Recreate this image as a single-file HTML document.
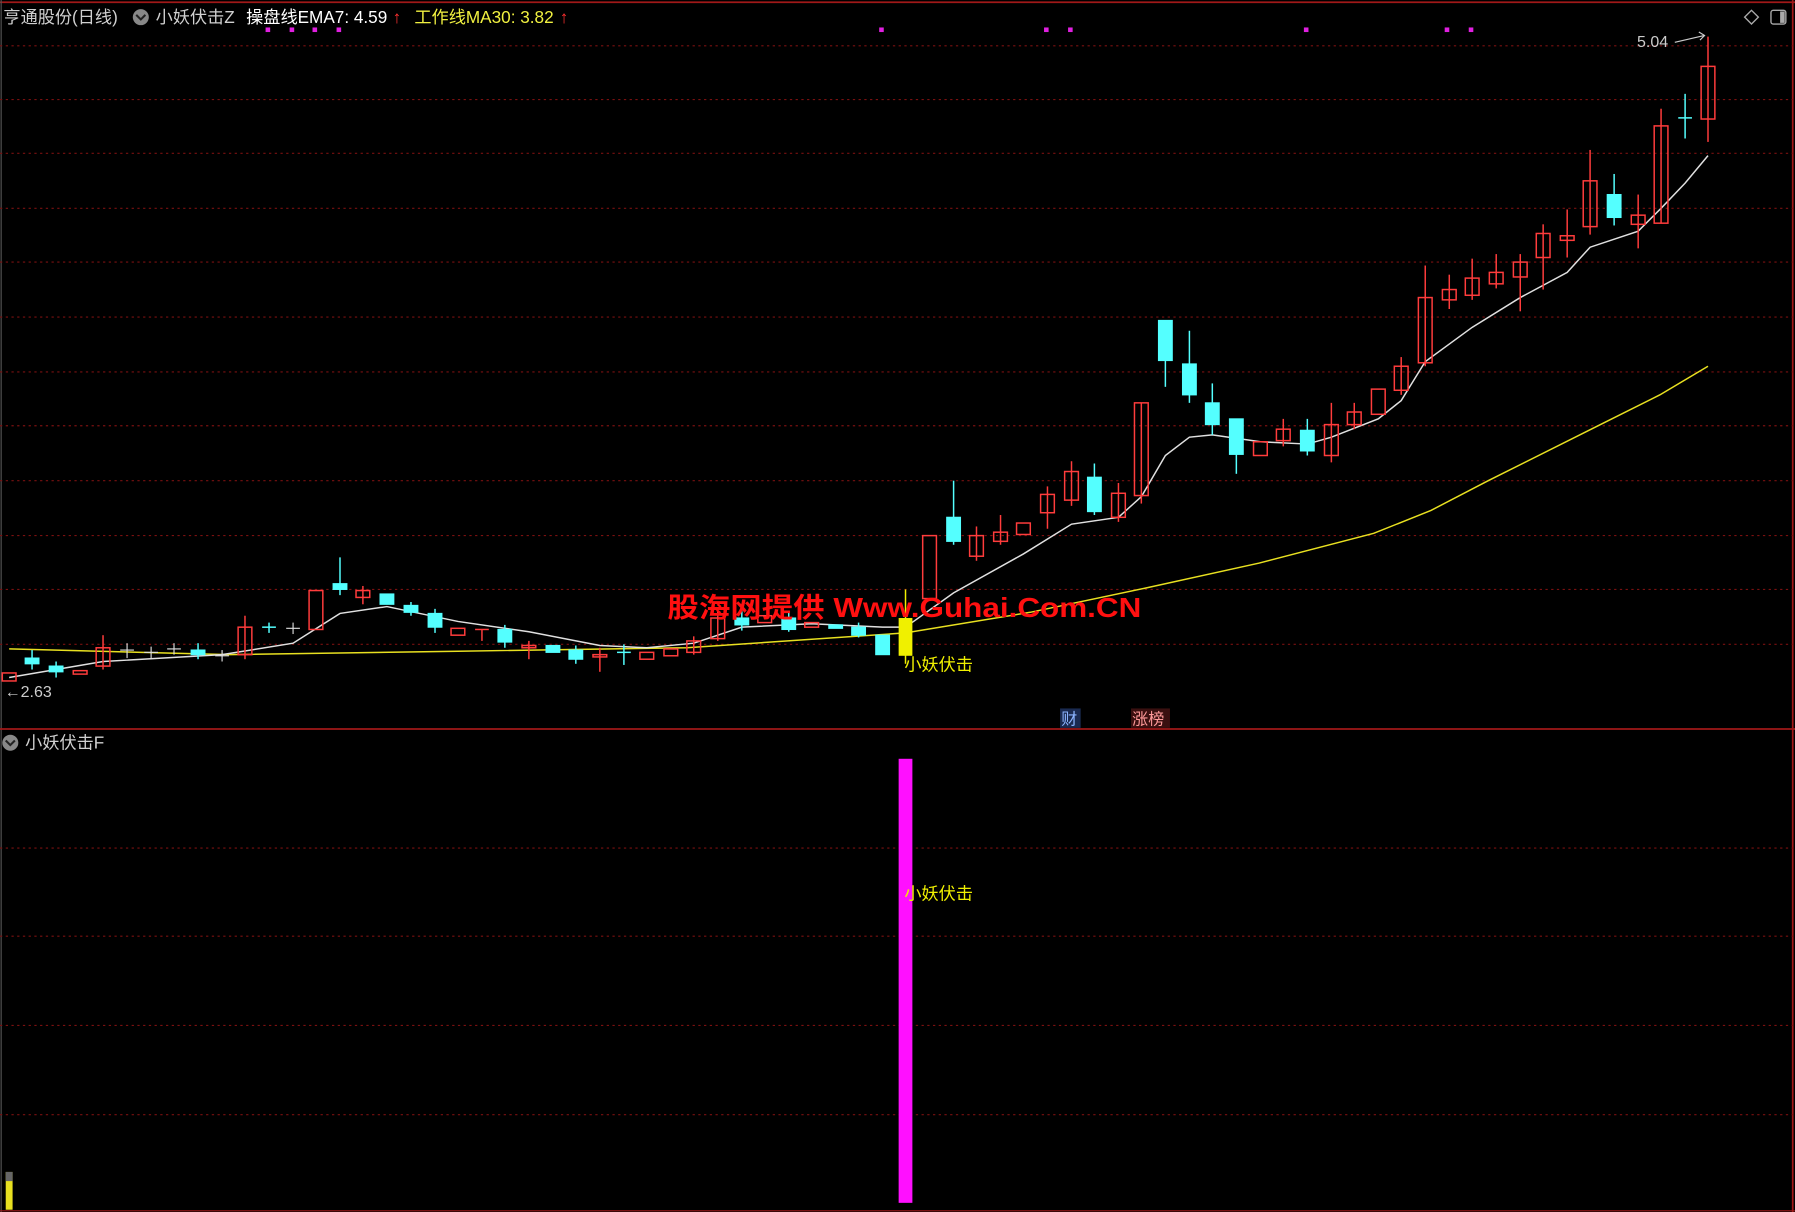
<!DOCTYPE html>
<html><head><meta charset="utf-8"><style>
html,body{margin:0;padding:0;background:#000;overflow:hidden}
svg{display:block}
text{font-family:"Liberation Sans","Noto Sans CJK SC",sans-serif}
.r{fill:none;stroke:#ff3c3c;stroke-width:1.3}
.c{fill:#54ffff;stroke:#54ffff;stroke-width:1}
.w{stroke:#ff3c3c;stroke-width:1.3}
.wc{stroke:#54ffff;stroke-width:1.3}
.g{stroke:#7a1010;stroke-width:1;stroke-dasharray:2 3}
</style></head><body>
<svg width="1795" height="1212" viewBox="0 0 1568 1059" preserveAspectRatio="none">
<rect width="1568" height="1059" fill="#000"/>
<line x1="0" y1="2" x2="1568" y2="2" stroke="#a01818" stroke-width="1.5"/>
<line x1="1566" y1="0" x2="1566" y2="1059" stroke="#a01818" stroke-width="1.5"/>
<line x1="1" y1="0" x2="1" y2="1059" stroke="#555" stroke-width="1"/>
<line x1="0" y1="637" x2="1568" y2="637" stroke="#a01818" stroke-width="1.5"/>
<line x1="0" y1="1058" x2="1568" y2="1058" stroke="#a01818" stroke-width="1"/>
<g class="g">
<line x1="0" y1="40" x2="1566" y2="40"/><line x1="0" y1="87" x2="1566" y2="87"/><line x1="0" y1="134" x2="1566" y2="134"/><line x1="0" y1="182" x2="1566" y2="182"/><line x1="0" y1="229" x2="1566" y2="229"/><line x1="0" y1="277" x2="1566" y2="277"/><line x1="0" y1="325" x2="1566" y2="325"/><line x1="0" y1="372" x2="1566" y2="372"/><line x1="0" y1="420" x2="1566" y2="420"/><line x1="0" y1="468" x2="1566" y2="468"/><line x1="0" y1="515" x2="1566" y2="515"/><line x1="0" y1="563" x2="1566" y2="563"/>
<line x1="0" y1="741" x2="1566" y2="741"/><line x1="0" y1="818" x2="1566" y2="818"/><line x1="0" y1="896" x2="1566" y2="896"/><line x1="0" y1="974" x2="1566" y2="974"/>
</g>
<text x="3" y="20" font-size="15" fill="#d0d0d0">亨通股份(日线)</text>
<circle cx="123" cy="15" r="7" fill="#888"/><path d="M119 13 L123 17 L127 13" stroke="#222" stroke-width="1.8" fill="none"/>
<text x="136" y="20" font-size="15" fill="#d0d0d0">小妖伏击Z</text>
<text x="215" y="20" font-size="15" fill="#ffffff">操盘线EMA7: 4.59</text>
<text x="343" y="20" font-size="15" fill="#ff3030">↑</text>
<text x="362" y="20" font-size="15" fill="#f0f040">工作线MA30: 3.82</text>
<text x="489" y="20" font-size="15" fill="#ff3030">↑</text>
<path d="M1530 9 L1536 15 L1530 21 L1524 15 Z" fill="none" stroke="#aaa" stroke-width="1.2"/>
<rect x="1547" y="9" width="13" height="12" rx="2" fill="none" stroke="#aaa" stroke-width="1.2"/><rect x="1555" y="10" width="4" height="10" fill="#aaa"/>
<g fill="#e020e0">
<rect x="232" y="24" width="4" height="4"/><rect x="253" y="24" width="4" height="4"/><rect x="273" y="24" width="4" height="4"/><rect x="294" y="24" width="4" height="4"/><rect x="768" y="24" width="4" height="4"/><rect x="912" y="24" width="4" height="4"/><rect x="933" y="24" width="4" height="4"/><rect x="1139" y="24" width="4" height="4"/><rect x="1262" y="24" width="4" height="4"/><rect x="1283" y="24" width="4" height="4"/>
</g>
<polyline fill="none" stroke="#e8e020" stroke-width="1.3" points="8,567 200,572 400,569 600,566 791,553 900,535 1000,514 1100,492 1200,466 1250,446 1300,420 1400,370 1450,345 1492,320"/>
<polyline fill="none" stroke="#e0e0e0" stroke-width="1.3" points="8,592 90,578 194,572 256,562 297,536 338,530 400,543 462,552 524,564 565,566 606,562 648,548 709,545 771,548 791,548 833,518 894,484 936,458 977,452 997,434 1018,398 1039,382 1059,380 1101,386 1142,388 1163,382 1204,366 1224,350 1245,316 1286,286 1328,260 1369,238 1389,216 1431,202 1451,182 1472,160 1492,136"/>
<g>
<rect class="r" x="2" y="588" width="12" height="7"/>
<line class="wc" x1="28" y1="568" x2="28" y2="585"/><rect class="c" x="22" y="575" width="12" height="5"/>
<line class="wc" x1="49" y1="578" x2="49" y2="592"/><rect class="c" x="43" y="582" width="12" height="5"/>
<rect class="r" x="64" y="586" width="12" height="3"/>
<line class="w" x1="90" y1="555" x2="90" y2="585"/><rect class="r" x="84" y="566" width="12" height="16"/>
<line stroke="#ddd" x1="105" y1="568" x2="117" y2="568"/><line stroke="#ddd" x1="111" y1="562" x2="111" y2="575"/>
<line stroke="#ddd" x1="126" y1="570" x2="138" y2="570"/><line stroke="#ddd" x1="132" y1="565" x2="132" y2="576"/>
<line stroke="#ddd" x1="146" y1="567" x2="158" y2="567"/><line stroke="#ddd" x1="152" y1="562" x2="152" y2="572"/>
<line class="wc" x1="173" y1="562" x2="173" y2="576"/><rect class="c" x="167" y="568" width="12" height="4"/>
<line stroke="#ddd" x1="188" y1="573" x2="200" y2="573"/><line stroke="#ddd" x1="194" y1="568" x2="194" y2="578"/>
<line class="w" x1="214" y1="538" x2="214" y2="576"/><rect class="r" x="208" y="548" width="12" height="24"/>
<line class="wc" x1="229" y1="548" x2="241" y2="548"/><line class="wc" x1="235" y1="544" x2="235" y2="553"/>
<line stroke="#ddd" x1="250" y1="549" x2="262" y2="549"/><line stroke="#ddd" x1="256" y1="544" x2="256" y2="554"/>
<rect class="r" x="270" y="516" width="12" height="34"/>
<line class="wc" x1="297" y1="487" x2="297" y2="520"/><rect class="c" x="291" y="510" width="12" height="5"/>
<line class="w" x1="317" y1="512" x2="317" y2="528"/><rect class="r" x="311" y="516" width="12" height="6"/>
<rect class="c" x="332" y="519" width="12" height="9"/>
<line class="wc" x1="359" y1="526" x2="359" y2="538"/><rect class="c" x="353" y="529" width="12" height="6"/>
<line class="wc" x1="380" y1="532" x2="380" y2="553"/><rect class="c" x="374" y="536" width="12" height="12"/>
<rect class="r" x="394" y="549" width="12" height="6"/>
<line class="w" x1="415" y1="550" x2="427" y2="550"/><line class="w" x1="421" y1="550" x2="421" y2="560"/>
<line class="wc" x1="441" y1="546" x2="441" y2="566"/><rect class="c" x="435" y="550" width="12" height="11"/>
<line class="w" x1="462" y1="560" x2="462" y2="576"/><rect class="r" x="456" y="564" width="12" height="2"/>
<rect class="c" x="477" y="564" width="12" height="6"/>
<line class="wc" x1="503" y1="564" x2="503" y2="580"/><rect class="c" x="497" y="568" width="12" height="8"/>
<line class="w" x1="524" y1="566" x2="524" y2="587"/><rect class="r" x="518" y="572" width="12" height="2"/>
<line class="wc" x1="539" y1="570" x2="551" y2="570"/><line class="wc" x1="545" y1="563" x2="545" y2="581"/>
<rect class="r" x="559" y="570" width="12" height="6"/>
<rect class="r" x="580" y="567" width="12" height="6"/>
<line class="w" x1="606" y1="556" x2="606" y2="572"/><rect class="r" x="600" y="560" width="12" height="10"/>
<line class="w" x1="627" y1="532" x2="627" y2="560"/><rect class="r" x="621" y="540" width="12" height="18"/>
<line class="wc" x1="648" y1="534" x2="648" y2="551"/><rect class="c" x="642" y="540" width="12" height="6"/>
<rect class="r" x="662" y="538" width="12" height="6"/>
<line class="wc" x1="689" y1="535" x2="689" y2="552"/><rect class="c" x="683" y="540" width="12" height="10"/>
<rect class="r" x="703" y="544" width="12" height="4"/>
<rect class="c" x="724" y="546" width="12" height="3"/>
<line class="wc" x1="750" y1="544" x2="750" y2="557"/><rect class="c" x="744" y="548" width="12" height="7"/>
<rect class="c" x="765" y="555" width="12" height="17"/>
<line stroke="#f0f000" stroke-width="1.3" x1="791" y1="515" x2="791" y2="580"/><rect x="785" y="540" width="12" height="33" fill="#f0f000"/>
<rect class="r" x="806" y="468" width="12" height="55"/>
<line class="wc" x1="833" y1="420" x2="833" y2="476"/><rect class="c" x="827" y="452" width="12" height="21"/>
<line class="w" x1="853" y1="460" x2="853" y2="490"/><rect class="r" x="847" y="468" width="12" height="18"/>
<line class="w" x1="874" y1="450" x2="874" y2="476"/><rect class="r" x="868" y="465" width="12" height="8"/>
<rect class="r" x="888" y="457" width="12" height="10"/>
<line class="w" x1="915" y1="425" x2="915" y2="462"/><rect class="r" x="909" y="432" width="12" height="16"/>
<line class="w" x1="936" y1="403" x2="936" y2="442"/><rect class="r" x="930" y="412" width="12" height="25"/>
<line class="wc" x1="956" y1="405" x2="956" y2="450"/><rect class="c" x="950" y="417" width="12" height="30"/>
<line class="w" x1="977" y1="422" x2="977" y2="456"/><rect class="r" x="971" y="431" width="12" height="21"/>
<line class="w" x1="997" y1="352" x2="997" y2="440"/><rect class="r" x="991" y="352" width="12" height="81"/>
<line class="wc" x1="1018" y1="280" x2="1018" y2="338"/><rect class="c" x="1012" y="280" width="12" height="35"/>
<line class="wc" x1="1039" y1="289" x2="1039" y2="352"/><rect class="c" x="1033" y="318" width="12" height="27"/>
<line class="wc" x1="1059" y1="335" x2="1059" y2="380"/><rect class="c" x="1053" y="352" width="12" height="19"/>
<line class="wc" x1="1080" y1="366" x2="1080" y2="414"/><rect class="c" x="1074" y="366" width="12" height="31"/>
<rect class="r" x="1095" y="386" width="12" height="12"/>
<line class="w" x1="1121" y1="366" x2="1121" y2="390"/><rect class="r" x="1115" y="375" width="12" height="10"/>
<line class="wc" x1="1142" y1="366" x2="1142" y2="398"/><rect class="c" x="1136" y="376" width="12" height="18"/>
<line class="w" x1="1163" y1="352" x2="1163" y2="404"/><rect class="r" x="1157" y="371" width="12" height="27"/>
<line class="w" x1="1183" y1="352" x2="1183" y2="375"/><rect class="r" x="1177" y="360" width="12" height="11"/>
<rect class="r" x="1198" y="340" width="12" height="22"/>
<line class="w" x1="1224" y1="312" x2="1224" y2="345"/><rect class="r" x="1218" y="320" width="12" height="21"/>
<line class="w" x1="1245" y1="232" x2="1245" y2="320"/><rect class="r" x="1239" y="260" width="12" height="57"/>
<line class="w" x1="1266" y1="240" x2="1266" y2="270"/><rect class="r" x="1260" y="253" width="12" height="9"/>
<line class="w" x1="1286" y1="226" x2="1286" y2="262"/><rect class="r" x="1280" y="243" width="12" height="15"/>
<line class="w" x1="1307" y1="222" x2="1307" y2="252"/><rect class="r" x="1301" y="238" width="12" height="10"/>
<line class="w" x1="1328" y1="222" x2="1328" y2="272"/><rect class="r" x="1322" y="229" width="12" height="13"/>
<line class="w" x1="1348" y1="196" x2="1348" y2="253"/><rect class="r" x="1342" y="204" width="12" height="21"/>
<line class="w" x1="1369" y1="183" x2="1369" y2="225"/><rect class="r" x="1363" y="206" width="12" height="4"/>
<line class="w" x1="1389" y1="131" x2="1389" y2="205"/><rect class="r" x="1383" y="158" width="12" height="40"/>
<line class="wc" x1="1410" y1="152" x2="1410" y2="197"/><rect class="c" x="1404" y="170" width="12" height="20"/>
<line class="w" x1="1431" y1="170" x2="1431" y2="217"/><rect class="r" x="1425" y="188" width="12" height="8"/>
<line class="w" x1="1451" y1="95" x2="1451" y2="195"/><rect class="r" x="1445" y="110" width="12" height="85"/>
<line class="wc" x1="1466" y1="103" x2="1478" y2="103"/><line class="wc" x1="1472" y1="82" x2="1472" y2="121"/>
<line class="w" x1="1492" y1="32" x2="1492" y2="124"/><rect class="r" x="1486" y="58" width="12" height="46"/>
</g>
<text x="1430" y="41" font-size="14" fill="#ccc">5.04</text>
<path d="M1463 37 L1489 31 M1484 28 L1489 31 L1485 35" stroke="#ccc" fill="none" stroke-width="1"/>
<text x="4" y="609" font-size="14" fill="#ccc">←2.63</text>
<text x="583" y="539" font-size="24" font-weight="bold" fill="#ff1010" textLength="414" lengthAdjust="spacingAndGlyphs">股海网提供 Www.Guhai.Com.CN</text>
<text x="790" y="586" font-size="15" fill="#f0f000">小妖伏击</text>
<rect x="926" y="619" width="18" height="17" fill="#1a2a50"/><text x="927" y="633" font-size="14" fill="#8cb4ff">财</text>
<rect x="988" y="619" width="34" height="17" fill="#3a1010"/><text x="989" y="633" font-size="14" fill="#ff9a9a">涨榜</text>
<circle cx="9" cy="649" r="7" fill="#888"/><path d="M5 647 L9 651 L13 647" stroke="#222" stroke-width="1.8" fill="none"/>
<text x="22" y="654" font-size="15" fill="#d0d0d0">小妖伏击F</text>
<rect x="785" y="663" width="12" height="388" fill="#ff10ff"/>
<text x="790" y="786" font-size="15" fill="#f0f000">小妖伏击</text>
<rect x="5" y="1024" width="6" height="33" fill="#e8e020"/><rect x="5" y="1024" width="6" height="8" fill="#666"/>
</svg>
</body></html>
